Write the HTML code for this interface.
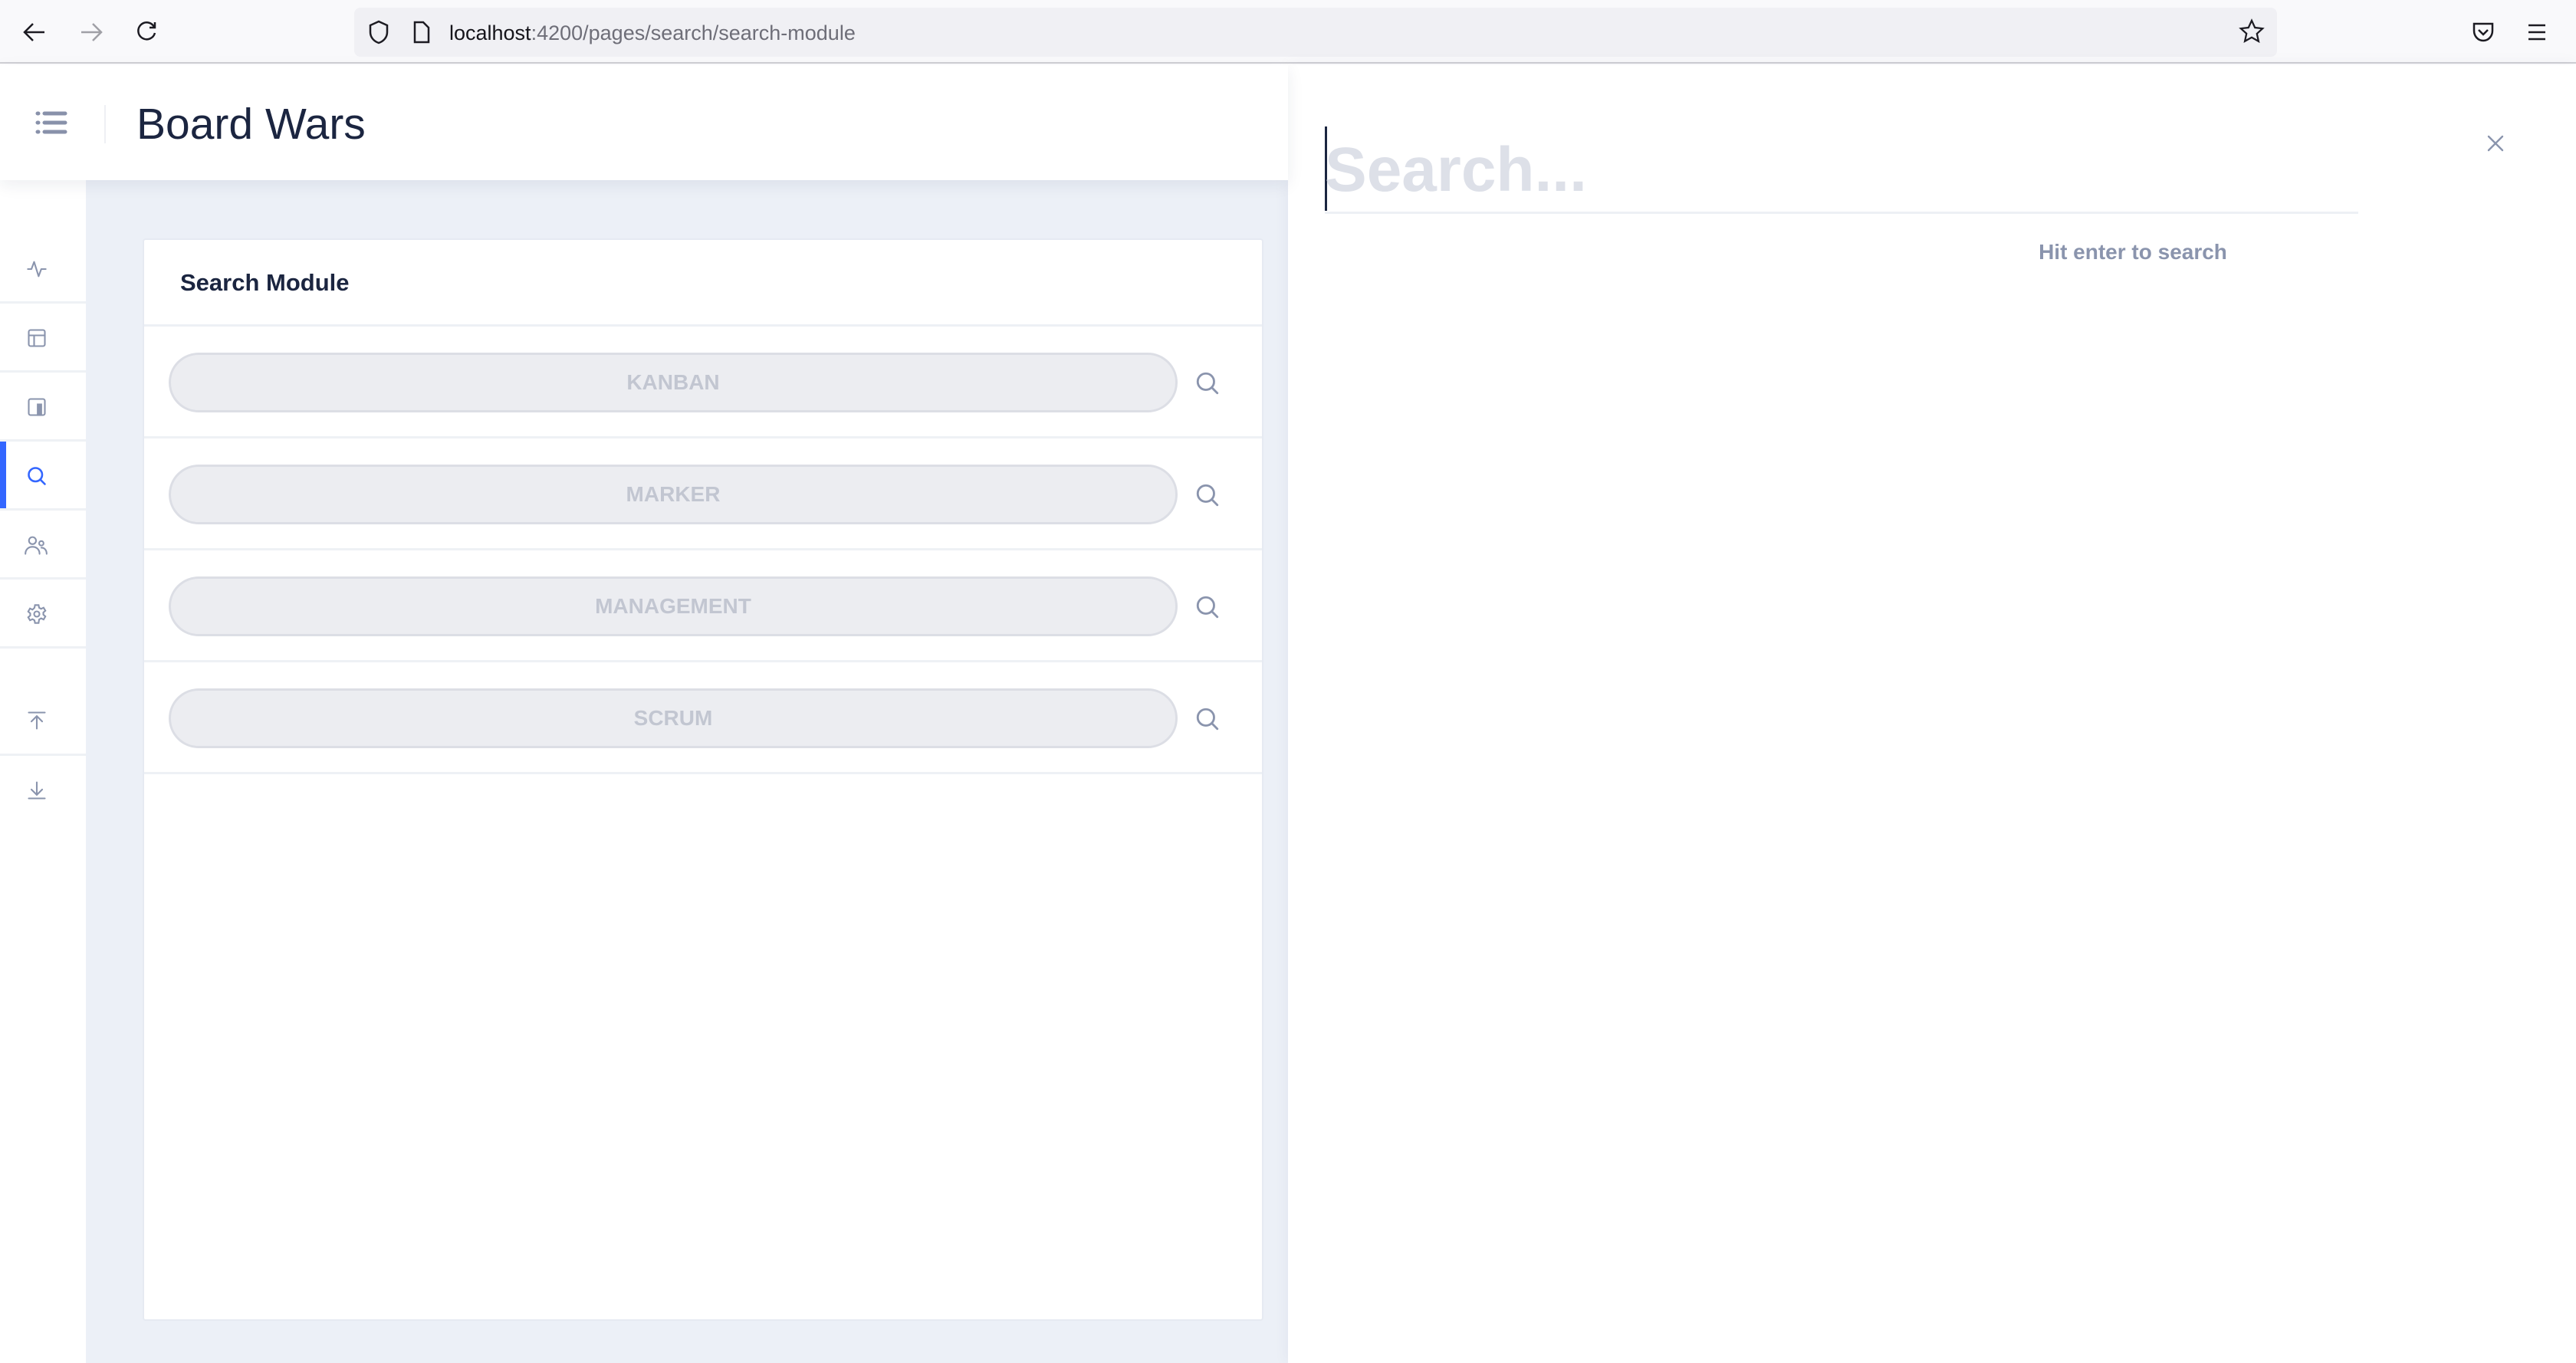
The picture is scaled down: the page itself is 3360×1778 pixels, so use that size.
<!DOCTYPE html>
<html><head><style>
*{margin:0;padding:0;box-sizing:border-box}
body{width:3360px;height:1778px;overflow:hidden;background:#fff;font-family:"Liberation Sans",sans-serif;position:relative}
.abs{position:absolute}
.browser{left:0;top:0;width:3360px;height:83px;background:#f9f9fb;border-bottom:2px solid #cfcfd4}
.url{left:462px;top:10px;width:2508px;height:64px;background:#f0f0f4;border-radius:8px}
.urltext{left:586px;top:28px;font-size:27px;color:#6e6e78}
.urltext b{font-weight:normal;color:#15141a}
.header{left:0;top:85px;width:1680px;height:150px;background:#fff;box-shadow:0 6px 20px rgba(30,40,80,0.08);z-index:2}
.title{left:178px;top:129px;font-size:57px;color:#1b2540}
.sidebar{left:0;top:235px;width:112px;height:1543px;background:#fff;z-index:1}
.content{left:112px;top:235px;width:1568px;height:1543px;background:#ecf0f7}
.card{left:186px;top:311px;width:1462px;height:1412px;background:#fff;border:2px solid #e6eaf2;border-radius:4px}
.cardh{left:0;top:0;width:100%;height:113px;border-bottom:3px solid #edf0f5}
.cardt{left:47px;top:38px;font-size:31px;font-weight:bold;color:#1b2540}
.row{left:0;width:100%;height:146px;border-bottom:3px solid #eef1f5}
.pill{left:32px;top:34px;width:1316px;height:78px;border-radius:39px;background:#ecedf1;border:3px solid #dcdee5;text-align:center;line-height:72px;font-size:28px;font-weight:bold;color:#c2c6d1}
.sicon{left:1370px;top:57px}
.side-i{left:34px}
.div{left:0;width:112px;height:3px;background:#eef1f5}
.panel{left:1680px;top:85px;width:1680px;height:1693px;background:#fff;box-shadow:0 0 20px rgba(30,40,80,0.06)}
</style></head><body>
<div class="abs browser"></div>
<svg class="abs" style="left:30px;top:28px" width="30" height="28" viewBox="0 0 30 28" fill="none" stroke="#1c1b22" stroke-width="2.5"><path d="M28 14H3M13 3L2 14l11 11"/></svg>
<svg class="abs" style="left:104px;top:28px" width="30" height="28" viewBox="0 0 30 28" fill="none" stroke="#a0a0a6" stroke-width="2.5"><path d="M2 14h25M17 3l11 11-11 11"/></svg>
<svg class="abs" style="left:176px;top:26px" width="30" height="30" viewBox="0 0 30 30" fill="none" stroke="#1c1b22" stroke-width="2.5"><path d="M25 9A11 11 0 1 0 26 17"/><path d="M26 3v7h-7"/></svg>
<div class="abs url"></div>
<svg class="abs" style="left:480px;top:26px" width="28" height="32" viewBox="0 0 28 32" fill="none" stroke="#1c1b22" stroke-width="2.5"><path d="M14 2L3 7v9c0 7 5 12 11 14 6-2 11-7 11-14V7z"/></svg>
<svg class="abs" style="left:538px;top:26px" width="24" height="32" viewBox="0 0 24 32" fill="none" stroke="#1c1b22" stroke-width="2.5"><path d="M3 3h11l7 7v19H3z"/></svg>
<div class="abs urltext"><b>localhost</b>:4200/pages/search/search-module</div>
<svg class="abs" style="left:2920px;top:24px" width="34" height="34" viewBox="0 0 24 24" fill="none" stroke="#1c1b22" stroke-width="1.6"><path d="M12 2l3 6.5 7 .8-5.2 4.8 1.5 7L12 17.5 5.7 21l1.5-7L2 9.3l7-.8z"/></svg>
<svg class="abs" style="left:3224px;top:28px" width="30" height="28" viewBox="0 0 30 28" fill="none" stroke="#1c1b22" stroke-width="2.5"><path d="M3 3h24v9c0 7-5 13-12 13S3 19 3 12z"/><path d="M9 11l6 6 6-6"/></svg>
<svg class="abs" style="left:3296px;top:30px" width="26" height="24" viewBox="0 0 26 24" stroke="#1c1b22" stroke-width="2.5"><path d="M2 3h22M2 12h22M2 21h22"/></svg>

<div class="abs content"></div>
<div class="abs header">
<svg class="abs" style="left:46px;top:60px" width="42" height="30" viewBox="0 0 42 30" stroke="#8891aa" stroke-width="5" stroke-linecap="round"><path d="M3 3h1M12 3h27M3 15h1M12 15h27M3 27h1M12 27h27"/></svg>
<div class="abs" style="left:136px;top:52px;width:2px;height:50px;background:#eef0f4"></div>
</div>
<div class="abs title" style="z-index:3">Board Wars</div>
<div class="abs sidebar">
<div class="abs div" style="top:158px"></div>
<div class="abs div" style="top:248px"></div>
<div class="abs div" style="top:338px"></div>
<div class="abs div" style="top:428px"></div>
<div class="abs div" style="top:518px"></div>
<div class="abs div" style="top:608px"></div>
<div class="abs div" style="top:748px"></div>
<div class="abs" style="left:0;top:341px;width:8px;height:87px;background:#3366ff"></div>
<svg class="abs side-i" style="top:102px" width="28" height="28" viewBox="0 0 24 24" fill="none" stroke="#8a94ad" stroke-width="1.8" stroke-linecap="round" stroke-linejoin="round"><path d="M2 12h4l3-8 5 16 3-8h5"/></svg>
<svg class="abs side-i" style="top:192px" width="28" height="28" viewBox="0 0 24 24" fill="none" stroke="#8a94ad" stroke-width="1.8"><rect x="3" y="3" width="18" height="18" rx="2"/><path d="M3 9h18M9 9v12"/></svg>
<svg class="abs side-i" style="top:282px" width="28" height="28" viewBox="0 0 24 24" fill="none" stroke="#8a94ad" stroke-width="1.8"><rect x="3" y="3" width="18" height="18" rx="2"/><rect x="13" y="9" width="4" height="12" fill="#8a94ad"/></svg>
<svg class="abs side-i" style="top:372px" width="28" height="28" viewBox="0 0 24 24" fill="none" stroke="#3366ff" stroke-width="2.2" stroke-linecap="round"><circle cx="10.5" cy="10.5" r="7.5"/><path d="M16 16l5 5"/></svg>
<svg class="abs" style="left:32px;top:462px" width="30" height="28" viewBox="0 0 26 24" fill="none" stroke="#8a94ad" stroke-width="1.8" stroke-linecap="round"><circle cx="9" cy="7" r="4"/><path d="M1 22c0-5 3.5-8 8-8s8 3 8 8"/><circle cx="19" cy="10" r="2.5"/><path d="M19 15c3 0 6 2 6 7"/></svg>
<svg class="abs side-i" style="top:552px" width="28" height="28" viewBox="0 0 24 24" fill="none" stroke="#8a94ad" stroke-width="1.8"><circle cx="12" cy="12" r="3"/><path d="M10 2h4l.6 3 2.2 1.2 2.8-1.3 2 3.4-2.3 2v2.4l2.3 2-2 3.4-2.8-1.3-2.2 1.3L14 22h-4l-.6-3-2.2-1.3-2.8 1.3-2-3.4 2.3-2v-2.4l-2.3-2 2-3.4 2.8 1.3L9.4 5z"/></svg>
<svg class="abs side-i" style="top:691px" width="28" height="28" viewBox="0 0 24 24" fill="none" stroke="#8a94ad" stroke-width="1.8" stroke-linecap="round"><path d="M3 3h18M12 21V8M6 13l6-6 6 6"/></svg>
<svg class="abs side-i" style="top:782px" width="28" height="28" viewBox="0 0 24 24" fill="none" stroke="#8a94ad" stroke-width="1.8" stroke-linecap="round"><path d="M3 21h18M12 3v13M6 11l6 6 6-6"/></svg>
</div>

<div class="abs card">
<div class="abs cardh"><div class="abs cardt">Search Module</div></div>
<div class="abs row" style="top:113px"><div class="abs pill">KANBAN</div><svg class="abs sicon" width="34" height="34" viewBox="0 0 24 24" fill="none" stroke="#8a94ad" stroke-width="2" stroke-linecap="round"><circle cx="10.5" cy="10.5" r="7.5"/><path d="M16 16l5 5"/></svg></div>
<div class="abs row" style="top:259px"><div class="abs pill">MARKER</div><svg class="abs sicon" width="34" height="34" viewBox="0 0 24 24" fill="none" stroke="#8a94ad" stroke-width="2" stroke-linecap="round"><circle cx="10.5" cy="10.5" r="7.5"/><path d="M16 16l5 5"/></svg></div>
<div class="abs row" style="top:405px"><div class="abs pill">MANAGEMENT</div><svg class="abs sicon" width="34" height="34" viewBox="0 0 24 24" fill="none" stroke="#8a94ad" stroke-width="2" stroke-linecap="round"><circle cx="10.5" cy="10.5" r="7.5"/><path d="M16 16l5 5"/></svg></div>
<div class="abs row" style="top:551px"><div class="abs pill">SCRUM</div><svg class="abs sicon" width="34" height="34" viewBox="0 0 24 24" fill="none" stroke="#8a94ad" stroke-width="2" stroke-linecap="round"><circle cx="10.5" cy="10.5" r="7.5"/><path d="M16 16l5 5"/></svg></div>
</div>

<div class="abs panel">
<div class="abs" style="left:48px;top:80px;width:3px;height:110px;background:#1b2540"></div>
<div class="abs" style="left:48px;top:82px;font-size:82px;font-weight:bold;color:#dde0e8;line-height:110px">Search...</div>
<div class="abs" style="left:48px;top:191px;width:1348px;height:3px;background:#edf0f5"></div>
<div class="abs" style="left:900px;top:228px;width:404px;text-align:center;font-size:28px;font-weight:bold;color:#8a94ad;white-space:nowrap">Hit enter to search</div>
<svg class="abs" style="left:1563px;top:90px" width="24" height="24" viewBox="0 0 24 24" stroke="#8a94ad" stroke-width="2.4" stroke-linecap="round"><path d="M3 3l18 18M21 3L3 21"/></svg>
</div>
</body></html>
